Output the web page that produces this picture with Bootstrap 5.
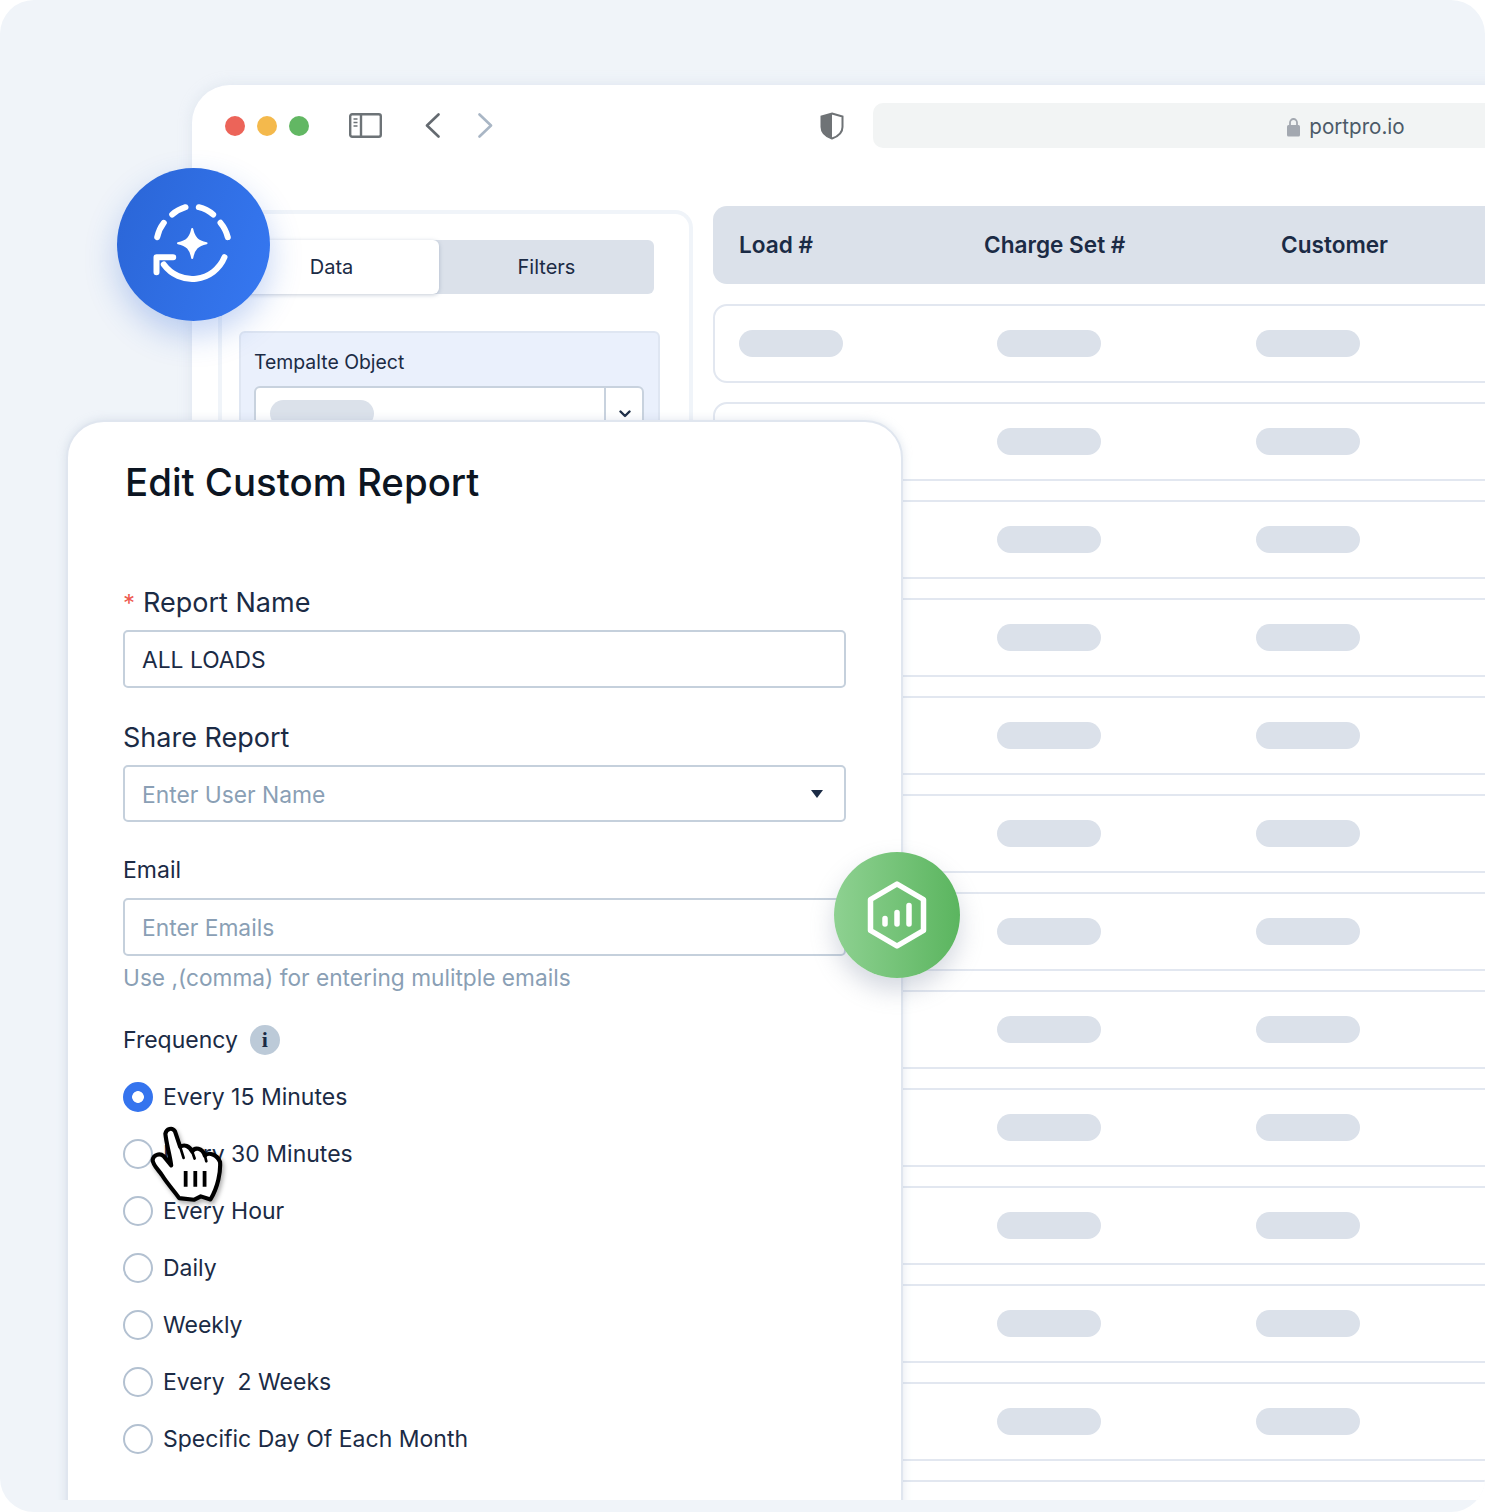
<!DOCTYPE html>
<html lang="en">
<head>
    <meta charset="UTF-8">
    <meta name="viewport" content="width=device-width, initial-scale=1.0">
    <title>Edit Custom Report</title>
    <link href="https://cdn.jsdelivr.net/npm/bootstrap@5.3.0/dist/css/bootstrap.min.css" rel="stylesheet">
    <style>
        html, body { margin: 0; background: #fff; overflow: hidden; }
        body { font-family: Inter, "Liberation Sans", sans-serif; color: #1b2b45; }

        .stage { width: 1485px; height: 1512px; background: #f0f4f9; border-radius: 34px; overflow: hidden; }
        .clip-area { position: relative; height: 1500px; overflow: hidden; padding: 85px 0 0 192px; }

        /* browser window */
        .browser-win { width: 1700px; height: 1500px; background: #fff; border-top-left-radius: 38px; box-shadow: 0 0 14px rgba(190, 202, 220, .35); }
        .browser-bar { height: 121px; padding: 18px 0 0 32.500px; }
        .bar-row { height: 45px; }
        .dot-btn { width: 20px; height: 20px; border-radius: 50%; margin-right: 12px; }
        .dot-red { background: #ec6459; }
        .dot-amber { background: #f4b94c; }
        .dot-green { background: #62b763; }
        .side-icon { margin-left: 28.500px; }
        .nav-back { margin-left: 43px; }
        .nav-next { margin-left: 38px; }
        .shield-icon { margin-left: 327px; }
        .url-bar { width: 946px; height: 45px; margin-left: 29px; background: #f2f4f4; border-radius: 10px; font-size: 20.600px; color: #4c5a68; gap: 9px; padding-top: 3px; }
        .browser-body { padding-left: 26px; }

        /* left panel */
        .side-panel { width: 475px; height: 500px; margin-top: 4px; margin-right: 20px; padding: 26px 0 0 2px; border: 4px solid #f0f4f9; border-bottom: 0; border-radius: 18px 18px 0 0; flex-shrink: 0; }
        .tab-strip { width: 430px; height: 54px; background: #dbe1ea; border-radius: 6px; margin-bottom: 37px; }
        .tab-item { width: 215px; height: 54px; display: flex; align-items: center; justify-content: center; font-size: 20px; color: #1b2b45; padding: 0; }
        .tab-item:hover { color: #1b2b45; }
        .tab-on { background: #fff; border-radius: 6px; box-shadow: 0 1px 4px rgba(90, 110, 140, .35); }
        .template-box { width: 421px; height: 150px; margin-left: 15px; padding: 17px 14px 0 13px; background: #eaf0fc; border: 2px solid #dfe6f2; border-radius: 6px; }
        .template-title { font-size: 19.400px; line-height: 24px; margin-bottom: 12px; }
        .template-input { height: 60px; background: #fff; border: 2px solid #c8d2de; border-radius: 6px; }
        .template-fill { flex: 1; padding: 12px 0 0 14px; }
        .template-caret { width: 38px; border-left: 2px solid #c8d2de; text-align: center; padding: 12px 0 0 1px; }
        .ghost-pill { display: block; width: 104px; height: 27px; background: #dbe1ea; border-radius: 14px; }

        /* table */
        .table-wrap { width: 1000px; }
        .head-row { height: 78px; background: #dbe1ea; border-radius: 14px; padding-left: 26px; font-size: 22.600px; font-weight: 600; margin-bottom: 20px; }
        .head-load { width: 245px; }
        .head-charge { width: 297px; }
        .body-row { height: 79px; border: 2px solid #e2e7f0; border-radius: 14px; margin-bottom: 19px; padding-left: 24px; background: #fff; }
        .body-row .ghost-pill { margin-right: 154px; }
        .body-row .ghost-pill + .ghost-pill { margin-right: 155px; }

        /* edit card */
        .edit-card { position: absolute; left: 66px; top: 420px; width: 837px; height: 1100px; padding: 37px 55px 0; background: #fff; border: 2px solid #e0e6ef; border-radius: 38px 38px 0 0; box-shadow: 0 0 10px rgba(170, 185, 205, .35); }
        .edit-title { font-size: 38.400px; line-height: 46px; font-weight: 500; color: #0c1522; margin: 0 0 82px 2px; }
        .field-big { font-size: 27px; line-height: 32px; font-weight: 400; margin: 0 0 10px; }
        .req-star { color: #ee5a4f; margin-right: 8px; font-size: 24px; }
        .field-small { font-size: 23px; line-height: 28px; margin: 34px 0 14px; }
        .field-big.mt-share { margin-top: 34px; margin-bottom: 11px; }
        .edit-card .form-control, .edit-card .form-select { height: 58px; font-size: 22.800px; color: #1b2b45; padding: 0 17px; border: 2px solid #c5d0dc; border-radius: 5px; box-shadow: none; }
        .edit-card .form-control::placeholder { color: #8a9fb5; opacity: 1; }
        .edit-card .form-select { height: 57px; padding-top: 3px; color: #8a9fb5; background-size: 12px 8px; background-position: right 21px center; background-image: url("data:image/svg+xml,%3csvg xmlns='http://www.w3.org/2000/svg' viewBox='0 0 12 8'%3e%3cpath fill='%231b2b45' d='M0 0h12L6 8z'/%3e%3c/svg%3e"); }
        .help-line { font-size: 22.700px; line-height: 28px; color: #8a9fb5; margin: 8px 0 33px; }
        .freq-label { font-size: 23px; line-height: 30px; margin-bottom: 27px; gap: 12px; }
        .info-dot { width: 30px; height: 30px; border-radius: 50%; background: #bccad8; font-family: "Liberation Serif", serif; font-weight: 700; font-size: 22px; line-height: 30px; text-align: center; }
        .radio-list { gap: 27px; }
        .radio-line { min-height: 30px; padding: 0; margin: 0; gap: 10px; font-size: 23px; line-height: 30px; }
        .radio-line .form-check-input { width: 30px; height: 30px; margin: 0; float: none; border: 2px solid #b3c1d1; box-shadow: none; flex-shrink: 0; }
        .radio-line .form-check-input:checked { background-color: #3574ee; border-color: #3574ee; background-image: radial-gradient(circle, #fff 5.500px, transparent 6.200px); }

        /* overlays */
        .blue-badge { position: absolute; left: 117px; top: 168px; width: 153px; height: 153px; border-radius: 50%; background: linear-gradient(110deg, #2a65d6, #3678f2); box-shadow: 0 14px 32px rgba(43, 102, 216, .28); }
        .green-badge { position: absolute; left: 834px; top: 852px; width: 126px; height: 126px; border-radius: 50%; background: linear-gradient(90deg, #8ed191, #5bb55f); box-shadow: 0 12px 24px rgba(120, 135, 160, .32); }
        .hand-cursor { position: absolute; left: 142.500px; top: 1120px; filter: drop-shadow(2px 3px 2px rgba(0, 0, 0, .3)); }
    </style>
</head>
<body>
    <div class="stage">
        <div class="clip-area">

            <!-- browser window -->
            <div class="browser-win">
                <div class="browser-bar">
                    <div class="bar-row d-flex align-items-center">
                        <span class="dot-btn dot-red"></span>
                        <span class="dot-btn dot-amber"></span>
                        <span class="dot-btn dot-green"></span>
                        <svg class="side-icon" width="33" height="25" viewBox="0 0 33 25" fill="none" stroke="#6d7377" stroke-width="2.400">
                            <rect x="1.200" y="1.200" width="30.600" height="22.600" rx="2"/>
                            <path d="M12 1v23"/>
                            <path d="M4.500 6h4M4.500 9.500h4M4.500 13h4" stroke-width="1.600"/>
                        </svg>
                        <svg class="nav-back" width="15" height="25" viewBox="0 0 15 25" fill="none" stroke="#646a70" stroke-width="2.600" stroke-linecap="round" stroke-linejoin="round"><path d="M13.500 1.500 2 12.500l11.500 11"/></svg>
                        <svg class="nav-next" width="15" height="25" viewBox="0 0 15 25" fill="none" stroke="#a9b6c5" stroke-width="2.600" stroke-linecap="round" stroke-linejoin="round"><path d="M1.500 1.500 13 12.500 1.500 23.500"/></svg>
                        <svg class="shield-icon" width="24" height="28" viewBox="0 0 24 28">
                            <path d="M12 1.500 22.500 4.500V15c0 5.500-4.500 9.500-10.500 11.500C6 24.500 1.500 20.500 1.500 15V4.500z" fill="#fff" stroke="#6f7376" stroke-width="2"/>
                            <path d="M12 1.500V26.500C6 24.500 1.500 20.500 1.500 15V4.500z" fill="#6f7376"/>
                        </svg>
                        <div class="url-bar d-flex align-items-center justify-content-center">
                            <svg width="13" height="20" viewBox="0 0 13 20"><path d="M3 9V5.500a3.500 3.500 0 0 1 7 0V9" fill="none" stroke="#a3a8b0" stroke-width="1.800"/><rect y="8" width="13" height="11.500" rx="1.500" fill="#a3a8b0"/></svg>
                            <span>portpro.io</span>
                        </div>
                    </div>
                </div>

                <div class="browser-body d-flex align-items-start">
                    <div class="side-panel">
                        <div class="nav tab-strip">
                            <a class="nav-link tab-item tab-on" href="#">Data</a>
                            <a class="nav-link tab-item" href="#">Filters</a>
                        </div>
                        <div class="template-box">
                            <div class="template-title">Tempalte Object</div>
                            <div class="template-input d-flex">
                                <div class="template-fill"><span class="ghost-pill"></span></div>
                                <div class="template-caret">
                                    <svg width="12" height="8" viewBox="0 0 12 8" fill="none" stroke="#1b2b45" stroke-width="2.400" stroke-linecap="round" stroke-linejoin="round"><path d="M1.500 1.500 6 6l4.500-4.500"/></svg>
                                </div>
                            </div>
                        </div>
                    </div>

                    <div class="table-wrap">
                        <div class="head-row d-flex align-items-center">
                            <div class="head-load">Load #</div>
                            <div class="head-charge">Charge Set #</div>
                            <div>Customer</div>
                        </div>
                        <div id="rows-container"></div>
                    </div>
                </div>
            </div>

            <!-- edit form -->
            <div class="edit-card">
                <h1 class="edit-title">Edit Custom Report</h1>
                <label class="field-big d-block"><span class="req-star">*</span>Report Name</label>
                <input class="form-control" type="text" value="ALL LOADS">
                <label class="field-big d-block mt-share">Share Report</label>
                <select class="form-select"><option>Enter User Name</option></select>
                <label class="field-small d-block">Email</label>
                <input class="form-control" type="text" placeholder="Enter Emails">
                <div class="help-line">Use ,(comma) for entering mulitple emails</div>
                <div class="freq-label d-flex align-items-center">
                    <span>Frequency</span>
                    <span class="info-dot">i</span>
                </div>
                <div class="radio-list d-flex flex-column">
                    <label class="form-check radio-line d-flex align-items-center"><input class="form-check-input" type="radio" name="freq" checked>Every 15 Minutes</label>
                    <label class="form-check radio-line d-flex align-items-center"><input class="form-check-input" type="radio" name="freq">Every 30 Minutes</label>
                    <label class="form-check radio-line d-flex align-items-center"><input class="form-check-input" type="radio" name="freq">Every Hour</label>
                    <label class="form-check radio-line d-flex align-items-center"><input class="form-check-input" type="radio" name="freq">Daily</label>
                    <label class="form-check radio-line d-flex align-items-center"><input class="form-check-input" type="radio" name="freq">Weekly</label>
                    <label class="form-check radio-line d-flex align-items-center"><input class="form-check-input" type="radio" name="freq">Every &nbsp;2 Weeks</label>
                    <label class="form-check radio-line d-flex align-items-center"><input class="form-check-input" type="radio" name="freq">Specific Day Of Each Month</label>
                </div>
            </div>

            <!-- blue badge -->
            <div class="blue-badge">
                <svg width="153" height="153" viewBox="116.500 167.500 153 153" fill="none" stroke="#fff" stroke-width="6" stroke-linecap="round" stroke-linejoin="round">
                    <path d="M156.700 236.700A36 36 0 0 1 163.300 222.300"/>
                    <path d="M171.700 214A36 36 0 0 1 185 206.700"/>
                    <path d="M198.300 206.700A36 36 0 0 1 212.700 214"/>
                    <path d="M220 222.300A36 36 0 0 1 227.300 236.700"/>
                    <path d="M224 256.700A35 35 0 0 1 163.300 264"/>
                    <path d="M172.700 256.700H156V271.700"/>
                    <path d="M191.700 228.500C193.500 237 197 241 206 242.700C197 244.500 193.500 248.500 191.700 257.500C190 248.500 186.500 244.500 177.500 242.700C186.500 241 190 237 191.700 228.500Z" fill="#fff" stroke-width="2"/>
                </svg>
            </div>

            <!-- green badge -->
            <div class="green-badge">
                <svg width="126" height="126" viewBox="834 852 126 126" fill="none" stroke="#fff" stroke-linecap="round" stroke-linejoin="round">
                    <path d="M897 884 923.500 899.500V930.500L897 946 870.500 930.500V899.500Z" stroke-width="5.500"/>
                    <path d="M885 918.500V924M897 912.500V924M909 905.500V924" stroke-width="5.500"/>
                </svg>
            </div>

            <!-- pointer -->
            <svg class="hand-cursor" width="86" height="86" viewBox="100 300 250 250">
                <path d="M165 340C168 325 185 320 193 333L208 378C220 370 235 375 243 392C250 378 272 380 280 404C290 392 316 400 324 422C326 450 318 495 296 531L268 522 248 532 205 527C190 505 170 485 155 460C145 445 128 430 128 416C130 402 148 395 160 405L182 432C178 400 168 370 165 340Z" fill="#fff" stroke="#000" stroke-width="12" stroke-linejoin="round"/>
                <path d="M224 448V494M252 448V494M279 448V494" fill="none" stroke="#000" stroke-width="11"/>
                <path d="M208 378 218 410M243 392 250 412M280 404 284 420" fill="none" stroke="#000" stroke-width="8" stroke-linecap="round"/>
            </svg>
        </div>
    </div>

    <script src="https://cdn.jsdelivr.net/npm/bootstrap@5.3.0/dist/js/bootstrap.bundle.min.js"></script>
    <script>
        const rowsContainer = document.getElementById('rows-container');
        for (let i = 0; i < 13; i++) {
            rowsContainer.innerHTML += `
                <div class="body-row d-flex align-items-center">
                    <span class="ghost-pill"></span>
                    <span class="ghost-pill"></span>
                    <span class="ghost-pill"></span>
                </div>`;
        }
    </script>
</body>
</html>
